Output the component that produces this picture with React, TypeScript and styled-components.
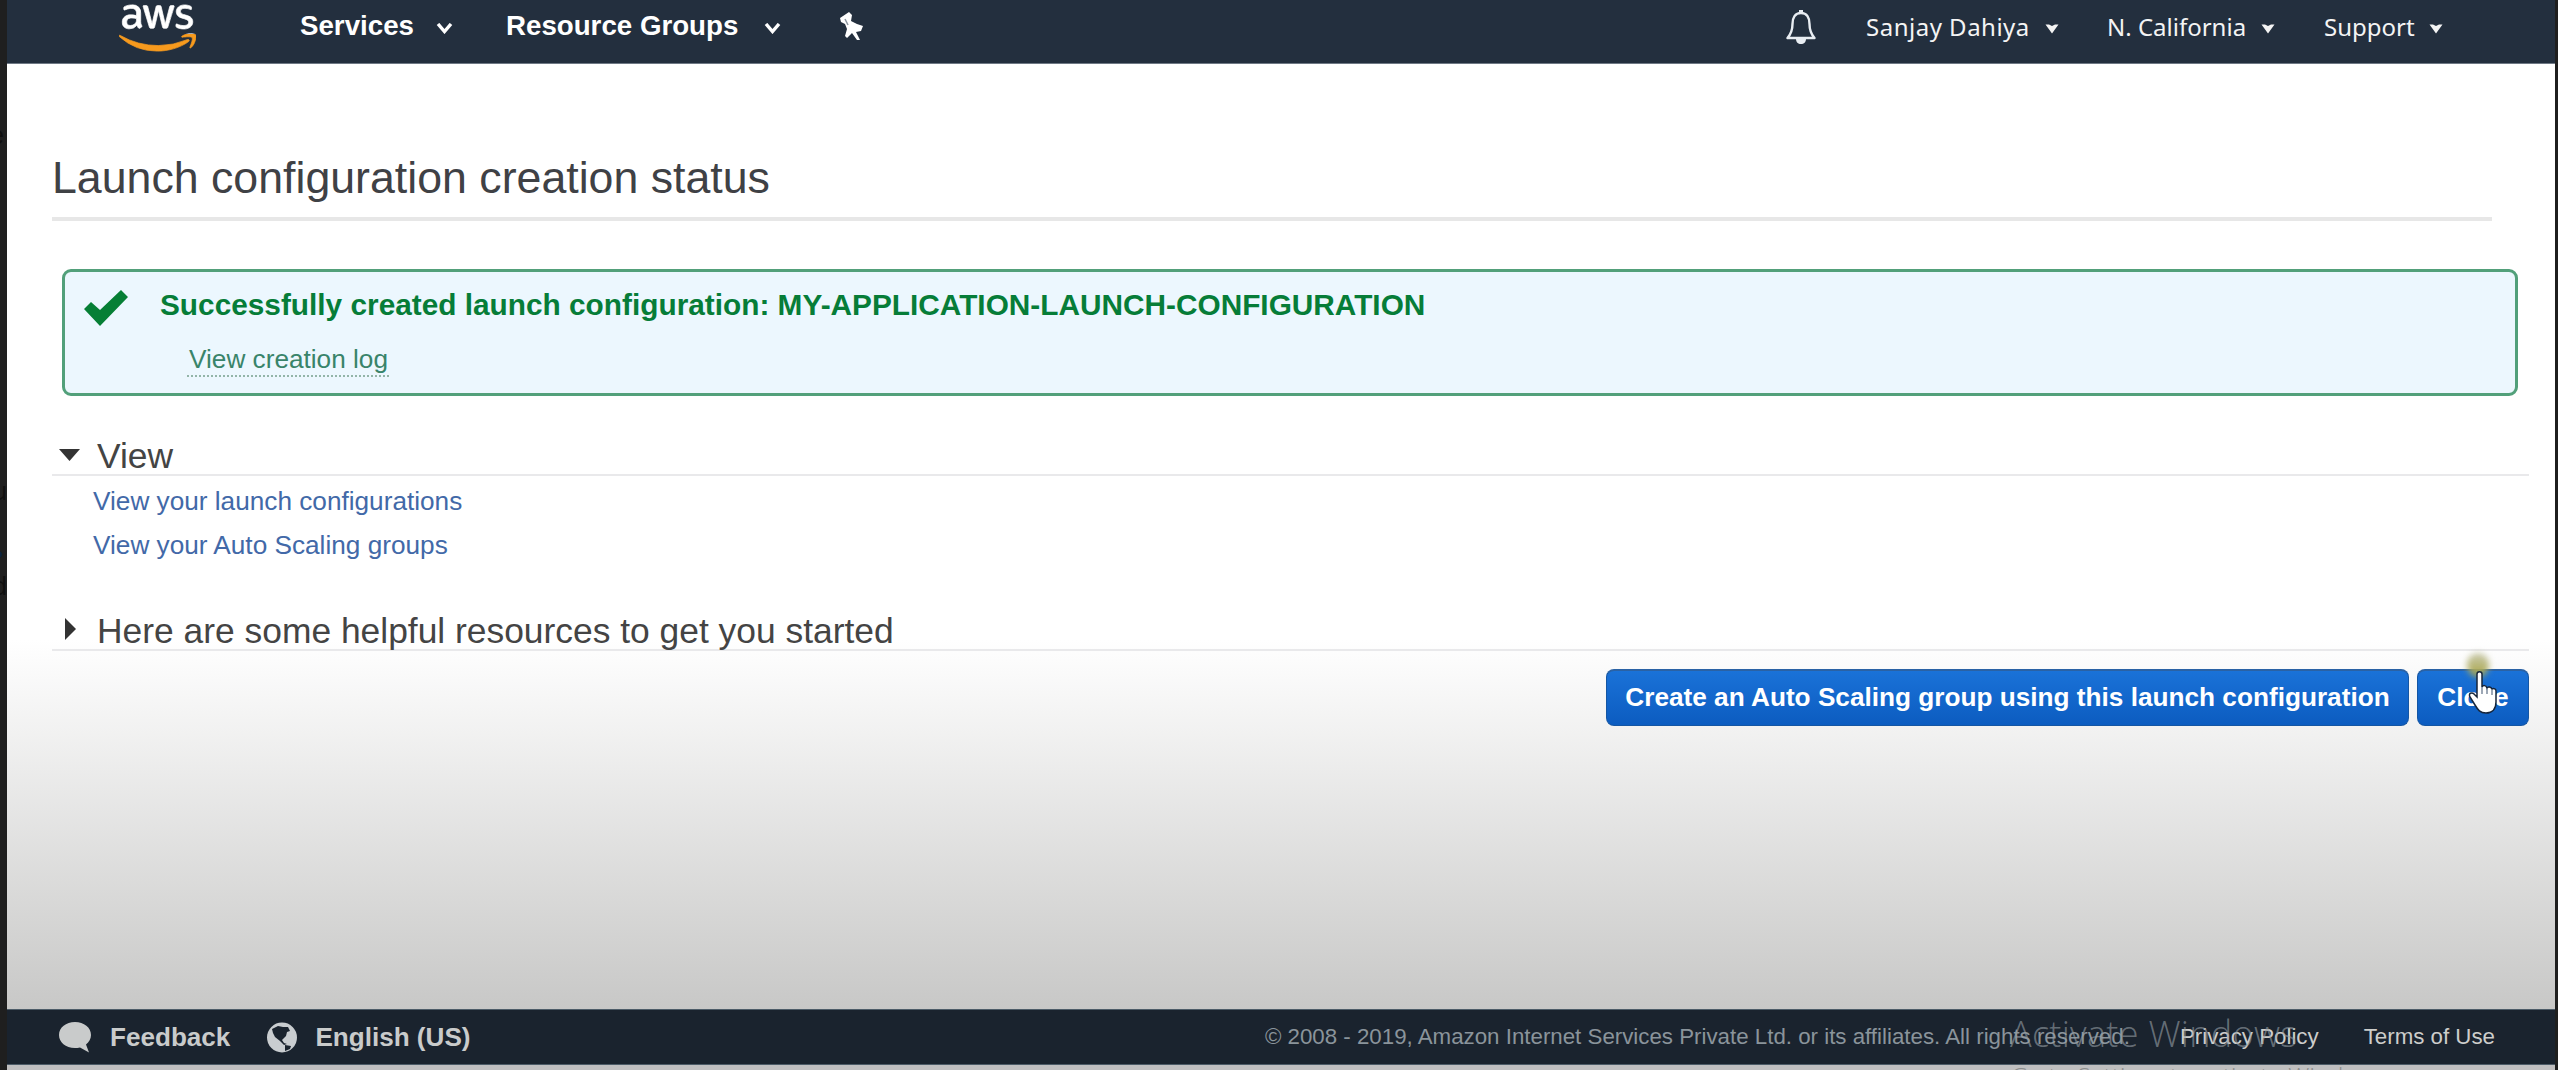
import React from 'react';
import styled, { createGlobalStyle } from 'styled-components';
import { FaAws } from 'react-icons/fa';

const GlobalStyle = createGlobalStyle`
  * { box-sizing: border-box; }
  html, body { margin: 0; padding: 0; background: #1f1f1f; }
  body { font-family: "Liberation Sans", Arial, sans-serif; overflow: hidden; }
`;

const Desktop = styled.div`
  display: flex;
  width: 2558px;
  height: 1070px;
  background: #1f1f1f;
`;

const Backdrop = styled.div`
  position: relative;
  width: 7px;
  height: 1070px;
  overflow: hidden;
  flex: none;
`;

const Peek = styled.span<{ $top: number; $right: number; $color?: string }>`
  position: absolute;
  right: ${(p) => p.$right}px;
  top: ${(p) => p.$top}px;
  font-size: 25px;
  line-height: 28px;
  color: ${(p) => p.$color || '#0f0f0f'};
`;

const Window = styled.div`
  width: 2548px;
  height: 1070px;
  display: flex;
  flex-direction: column;
  overflow: hidden;
  background: #c0bfc0;
`;

const TopBar = styled.header`
  height: 64px;
  flex: none;
  display: flex;
  justify-content: space-between;
  background: #232f3e;
  border-bottom: 1px solid #6f7985;
`;

const NavGroup = styled.nav<{ $pad: string }>`
  display: flex;
  align-items: flex-start;
  padding: ${(p) => p.$pad};
`;

const Logo = styled.div`
  width: 77px;
  height: 62px;
  margin-right: 104px;
  svg { display: block; width: 77px; height: 62px; margin-top: -3px; }
`;

const LogoPaint = styled.svg`
  && { position: absolute; width: 0; height: 0; margin: 0; }
`;

const MainItem = styled.div<{ $w: number }>`
  display: flex;
  align-items: flex-start;
  justify-content: space-between;
  width: ${(p) => p.$w}px;
  margin-right: 53px;
  padding-top: 10px;
  color: #fff;
  font-size: 27.7px;
  line-height: 32px;
  font-weight: 700;
  white-space: nowrap;
  svg { margin-top: 13px; }
`;

const PinIcon = styled.svg`
  margin-top: 12px;
  margin-left: 5px;
`;

const AccountItem = styled.div<{ $w: number; $gap: number; $tracking?: number }>`
  display: flex;
  align-items: flex-start;
  justify-content: space-between;
  width: ${(p) => p.$w}px;
  margin-left: ${(p) => p.$gap}px;
  padding-top: 10px;
  color: #f4f4f4;
  font-family: "Noto Sans", "Open Sans", sans-serif;
  font-size: 24px;
  line-height: 34px;
  letter-spacing: ${(p) => p.$tracking || 0}px;
  white-space: nowrap;
  svg { margin-top: 14px; }
`;

const BellIcon = styled.svg`
  margin-top: 10px;
`;

const Page = styled.main`
  height: 945px;
  flex: none;
  display: flex;
  flex-direction: column;
  padding: 0 26px 0 45px;
  background: linear-gradient(to bottom, #fff 0, #fff 576px, #c8c8c7 945px);
`;

const Title = styled.h1`
  margin: 0 37px 0 0;
  height: 157px;
  padding-top: 89px;
  border-bottom: 4px solid #e7e7e7;
  color: #3f4145;
  font-size: 44.7px;
  line-height: 50px;
  font-weight: 400;
`;

const Notice = styled.section`
  display: flex;
  margin: 48px 11px 0 10px;
  height: 127px;
  padding: 17px 0 0 18px;
  border: 3px solid #52a07a;
  border-radius: 9px;
  background: #ecf7fe;
`;

const NoticeText = styled.div`
  display: flex;
  flex-direction: column;
  align-items: flex-start;
  margin: -1px 0 0 31px;
`;

const NoticeTitle = styled.strong`
  color: #067d38;
  font-size: 29.8px;
  line-height: 34px;
`;

const LogLink = styled.a`
  margin: 23px 0 0 27px;
  padding: 0 1px 0 2px;
  height: 32px;
  border-bottom: 2px dotted #93b5a8;
  color: #39846a;
  font-size: 26.2px;
  line-height: 28px;
`;

const Section = styled.div<{ $top: number; $h: number }>`
  display: flex;
  align-items: flex-start;
  margin-top: ${(p) => p.$top}px;
  height: ${(p) => p.$h}px;
  border-bottom: 2px solid #e9e9eb;
`;

const Arrow = styled.svg`
  width: 24px;
  height: 24px;
  margin: 7px 15px 0 6px;
`;

const SectionTitle = styled.h2`
  margin: 0;
  color: #444;
  font-size: 35.4px;
  line-height: 40px;
  font-weight: 400;
`;

const Links = styled.div`
  display: flex;
  flex-direction: column;
  padding: 3px 0 0 41px;
`;

const PageLink = styled.a`
  color: #4269a8;
  font-size: 26.2px;
  line-height: 44px;
`;

const Actions = styled.div`
  display: flex;
  justify-content: flex-end;
  gap: 8px;
  margin-top: 18px;
`;

const Button = styled.button<{ $w: number }>`
  position: relative;
  width: ${(p) => p.$w}px;
  height: 57px;
  padding: 0 0 1px;
  border: 1px solid #1456a4;
  border-top: 2px solid #2a62a5;
  border-radius: 8px;
  background: linear-gradient(#1a72d8, #0c5cc0);
  color: #fff;
  font-family: "Liberation Sans", Arial, sans-serif;
  font-size: 26.2px;
  font-weight: 700;
  white-space: nowrap;
`;

const ClickGlow = styled.span`
  position: absolute;
  left: 49px;
  top: -18px;
  width: 22px;
  height: 24px;
  border-radius: 50%;
  background: linear-gradient(rgba(185, 186, 150, 0.75), #a8a443);
  filter: blur(3px);
`;

const Pointer = styled.svg`
  position: absolute;
  left: 49px;
  top: -1px;
`;

const Footer = styled.footer`
  position: relative;
  height: 56px;
  flex: none;
  display: flex;
  justify-content: space-between;
  align-items: center;
  padding: 0 60px 0 52px;
  border-top: 1px solid #4d5c68;
  border-bottom: 1px solid #4d5c68;
  background: #1a232e;
`;

const FooterGroup = styled.div`
  display: flex;
  align-items: center;
  white-space: nowrap;
`;

const FooterItem = styled.span<{ $gap: number }>`
  margin: 0 ${(p) => p.$gap}px 0 18px;
  color: #c9cbcb;
  font-size: 26.1px;
  line-height: 30px;
  font-weight: 700;
`;

const Legal = styled.span<{ $dim?: boolean; $gap?: number }>`
  margin-left: ${(p) => p.$gap || 0}px;
  color: ${(p) => (p.$dim ? '#8a949b' : '#cdcdcb')};
  font-size: 22.3px;
  line-height: 26px;
`;

const Watermark = styled.span<{ $x: number; $y: number; $size: number; $color: string }>`
  position: absolute;
  left: ${(p) => p.$x}px;
  top: ${(p) => p.$y}px;
  font-family: "Open Sans", "Noto Sans", sans-serif;
  font-weight: 300;
  font-size: ${(p) => p.$size}px;
  line-height: 48px;
  letter-spacing: 0.3px;
  color: ${(p) => p.$color};
  white-space: nowrap;
`;

const Chevron = () => (
  <svg width="17" height="11" viewBox="0 0 17 11">
    <path d="M2 1l6.500 7.500L15 1" fill="none" stroke="#fff" strokeWidth="3.400" />
  </svg>
);

const Caret = () => (
  <svg width="14" height="10" viewBox="0 0 14 10">
    <path d="M.5 .5h3.500l3 1.500 3-1.500h3.500L7 9.500z" fill="#f4f4f4" />
  </svg>
);

export default function App() {
  return (
    <Desktop>
      <GlobalStyle />
      <Backdrop>
        <Peek $top={121} $right={3}>e</Peek>
        <Peek $top={477} $right={0}>u</Peek>
        <Peek $top={540} $right={4} $color="#0d2340">•</Peek>
        <Peek $top={572} $right={0}>d</Peek>
      </Backdrop>
      <Window>
        <TopBar>
          <NavGroup $pad="0 0 0 112px">
            <Logo>
              <LogoPaint>
                <linearGradient id="brand" gradientUnits="userSpaceOnUse" x1="0" y1="0" x2="0" y2="512">
                  <stop offset="0.6" stopColor="#fff" />
                  <stop offset="0.6" stopColor="#f79a1d" />
                </linearGradient>
              </LogoPaint>
              <FaAws fill="url(#brand)" stroke="url(#brand)" strokeWidth={6} />
            </Logo>
            <MainItem $w={153}>Services<Chevron /></MainItem>
            <MainItem $w={275}>Resource Groups<Chevron /></MainItem>
            <PinIcon width="25" height="28" viewBox="0 0 25 28">
              <path d="M1 6l9-6 3 3-1 6 6 3 6 2-2 5-5 1 4 8h-3l-5-7-5 5-2-2 2-7-2-5-4-2z" fill="#fff" />
              <path d="M6 7l3 6" stroke="#8d96a0" strokeWidth="1.500" />
            </PinIcon>
          </NavGroup>
          <NavGroup $pad="0 112px 0 0">
            <BellIcon width="30" height="35" viewBox="0 0 30 35">
              <path d="M15 3c-6 0-8.500 5-8.500 11 0 7-1.500 10-5 14h27c-3.500-4-5-7-5-14 0-6-2.500-11-8.500-11z" fill="none" stroke="#e8edf2" strokeWidth="2.400" strokeLinejoin="round" />
              <path d="M13 0h4v4h-4zM10 29h10c0 3-2 5-5 5s-5-2-5-5z" fill="#e8edf2" />
            </BellIcon>
            <AccountItem $w={193} $gap={50} $tracking={0.5}>Sanjay Dahiya<Caret /></AccountItem>
            <AccountItem $w={168} $gap={48}>N. California<Caret /></AccountItem>
            <AccountItem $w={119} $gap={49}>Support<Caret /></AccountItem>
          </NavGroup>
        </TopBar>
        <Page>
          <Title>Launch configuration creation status</Title>
          <Notice>
            <svg width="46" height="38" viewBox="0 0 46 38">
              <path d="M1 20l7-7 9 8L38 1l7 7-28 29z" fill="#067f35" />
            </svg>
            <NoticeText>
              <NoticeTitle>Successfully created launch configuration: MY-APPLICATION-LAUNCH-CONFIGURATION</NoticeTitle>
              <LogLink>View creation log</LogLink>
            </NoticeText>
          </Notice>
          <Section $top={40} $h={40}>
            <Arrow viewBox="0 0 24 24"><path d="M1 6h21L11.500 18z" fill="#333" /></Arrow>
            <SectionTitle>View</SectionTitle>
          </Section>
          <Links>
            <PageLink>View your launch configurations</PageLink>
            <PageLink>View your Auto Scaling groups</PageLink>
          </Links>
          <Section $top={44} $h={40}>
            <Arrow viewBox="0 0 24 24"><path d="M7 0v22l11-11z" fill="#333" /></Arrow>
            <SectionTitle>Here are some helpful resources to get you started</SectionTitle>
          </Section>
          <Actions>
            <Button $w={803}>Create an Auto Scaling group using this launch configuration</Button>
            <Button $w={112}>
              Close
              <ClickGlow />
              <Pointer width="34" height="46" viewBox="0 0 34 46">
                <path d="M10 4c0-3 5-3 5 0v13c1-2 4-2 5 1 1-2 4-1 5 1 2-1 4 0 4 2v11c0 7-4 11-10 11-6 0-8-3-11-8l-5-8c-2-4 2-5 4-3l3 3z" fill="#fff" stroke="#16253a" strokeWidth="1.500" />
                <path d="M15 17v7M20 18v6M25 20v5" stroke="#5d6e86" strokeWidth="1.200" />
              </Pointer>
            </Button>
          </Actions>
        </Page>
        <Footer>
          <FooterGroup>
            <svg width="33" height="31" viewBox="0 0 33 31">
              <path d="M16 0c9 0 16 5.500 16 13 0 4-2 7-5 9.500l3 8-9-5c-12 2.500-21-4-21-12.500C0 5.500 7 0 16 0z" fill="#c9cbcb" />
            </svg>
            <FooterItem $gap={37}>Feedback</FooterItem>
            <svg width="30" height="31" viewBox="0 0 30 31">
              <circle cx="15" cy="15.500" r="15" fill="#c9cdd0" />
              <path d="M5 7l6-3 5 1 5 0 2 4-3 1-1 4-4 4 2 3 3 1-3 1-4-4-5-4-2-4zM18 23l6 1-1 3-5 2z" fill="#1a232e" />
            </svg>
            <FooterItem $gap={0}>English (US)</FooterItem>
          </FooterGroup>
          <FooterGroup>
            <Legal $dim>© 2008 - 2019, Amazon Internet Services Private Ltd. or its affiliates. All rights reserved.</Legal>
            <Legal $gap={50}>Privacy Policy</Legal>
            <Legal $gap={45}>Terms of Use</Legal>
          </FooterGroup>
          <Watermark $x={2003} $y={0} $size={36} $color="rgba(150,158,165,.62)">Activate Windows</Watermark>
          <Watermark $x={2004} $y={42} $size={23.5} $color="#8c8c8c">Go to Settings to activate Windows.</Watermark>
        </Footer>
      </Window>
    </Desktop>
  );
}
